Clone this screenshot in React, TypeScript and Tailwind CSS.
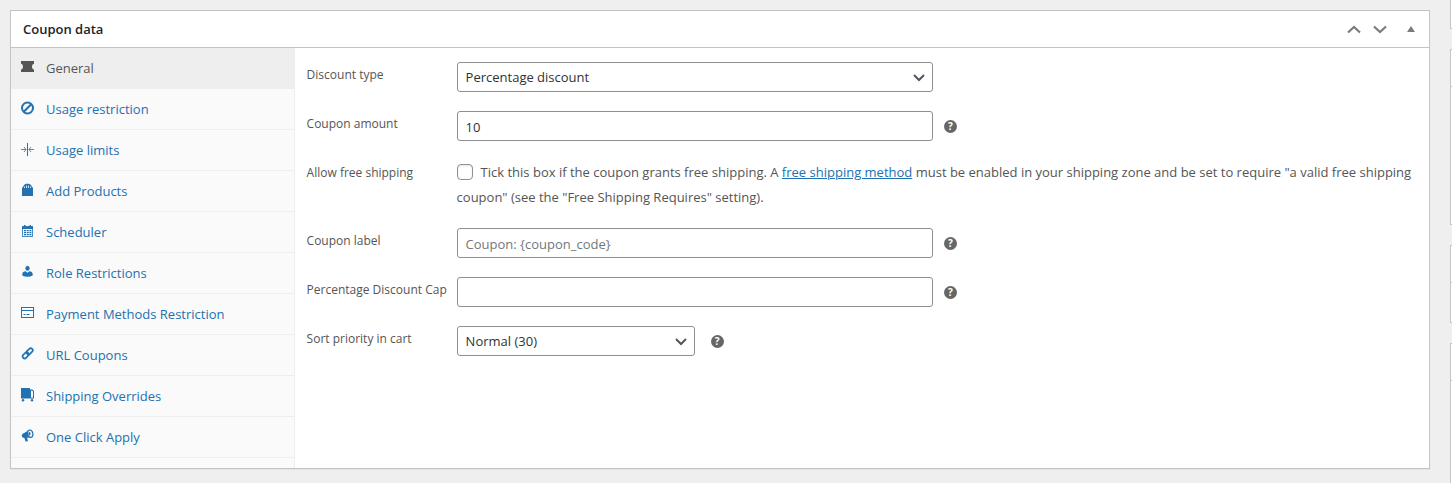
import type { ReactNode } from 'react';

const icons: Record<string, ReactNode> = {
  ticket: (
    <path fill="currentColor" d="M0 1h13v2.800c-1.200.3-2 1.300-2 2.900s.8 2.600 2 2.900V12H0V9.600c1.200-.3 2-1.300 2-2.900s-.8-2.600-2-2.900z" />
  ),
  ban: (
    <g fill="none" stroke="currentColor" strokeWidth="2">
      <circle cx="6.500" cy="7" r="5.500" />
      <path d="M2.800 10.700l7.400-7.400" />
    </g>
  ),
  limits: (
    <g fill="none" stroke="currentColor" strokeWidth="1">
      <path d="M6.500 1v13" />
      <path d="M0 7.500h5M13 7.500H8M3 5l2 2.500L3 10M10 5L8 7.500l2 2.500" opacity=".8" />
    </g>
  ),
  bag: (
    <g>
      <path fill="currentColor" d="M1 4.500h11V13H1z" />
      <path fill="currentColor" d="M1.500 5L3 2c1-1 2-1.300 3.500-1.300S9 1 10 2l1.500 3z" />
      <path stroke="#fafafa" strokeWidth=".8" fill="none" d="M3.500 5V3.500M5.500 5V2.500M7.500 5V2.500M9.500 5V3.500" />
    </g>
  ),
  calendar: (
    <g fill="currentColor">
      <path d="M1 2h11v11H1zM2 5v7h9V5z" fillRule="evenodd" opacity=".8" />
      <path d="M1 2.500h11V5H1zM3 1h1.500v2H3zM8.500 1H10v2H8.500z" />
      <path d="M3 6h2v1.300H3zM5.700 6h2v1.300h-2zM8.400 6h2v1.300h-2zM3 8h2v1.300H3zM5.700 8h2v1.300h-2zM8.400 8h2v1.300h-2zM3 10h2v1.300H3zM5.700 10h2v1.300h-2zM8.400 10h2v1.300h-2z" />
    </g>
  ),
  person: (
    <g fill="currentColor">
      <ellipse cx="6.500" cy="3.200" rx="2.100" ry="2.500" />
      <path d="M1.300 10.500V9.200C1.300 7.200 2.800 6.300 4.500 6.200l2 1.600 2-1.600c1.700.1 3.200 1 3.200 3v1.300c-1.500.8-3.200 1.200-5.200 1.200s-3.700-.4-5.200-1.200z" />
    </g>
  ),
  card: (
    <g fill="none" stroke="currentColor">
      <rect x=".5" y="1.500" width="12" height="10" />
      <path d="M1 4.500h11M2.500 8.500h2M5.500 8.500h3" />
    </g>
  ),
  link: (
    <g fill="none" stroke="currentColor" strokeWidth="1.700">
      <rect x="-3.500" y="-2" width="7" height="4" rx="2" transform="translate(4.700 8.300) rotate(-45)" />
      <rect x="-3.500" y="-2" width="7" height="4" rx="2" transform="translate(8.700 4.300) rotate(-45)" />
    </g>
  ),
  truck: (
    <g fill="currentColor">
      <path d="M0 0h9v10.500H0z" />
      <path d="M9 1.500h2.500L13 3v7.500H9zM10 2.800v6.700h2v-6l-.8-.7z" fillRule="evenodd" />
      <circle cx="2" cy="12.300" r="1.200" />
      <circle cx="11" cy="12.300" r="1.200" />
    </g>
  ),
  megaphone: (
    <g>
      <path fill="currentColor" d="M.8 6.500c0-1 .8-1.800 2-2.200L6.500 2 8 .8l2.500 8L7 8.600l-.9.200L7 12.200l-2.400.4L3.400 9C1.800 9 .8 8 .8 6.500z" />
      <ellipse cx="9.200" cy="4.700" rx="2.600" ry="3.700" transform="rotate(-12 9.200 4.700)" fill="#fafafa" stroke="currentColor" strokeWidth="1.200" />
      <ellipse cx="8.500" cy="4.800" rx="1.100" ry="1.700" fill="currentColor" />
    </g>
  ),
};

const tabs = [
  { icon: 'ticket', label: 'General' },
  { icon: 'ban', label: 'Usage restriction' },
  { icon: 'limits', label: 'Usage limits' },
  { icon: 'bag', label: 'Add Products' },
  { icon: 'calendar', label: 'Scheduler' },
  { icon: 'person', label: 'Role Restrictions' },
  { icon: 'card', label: 'Payment Methods Restriction' },
  { icon: 'link', label: 'URL Coupons' },
  { icon: 'truck', label: 'Shipping Overrides' },
  { icon: 'megaphone', label: 'One Click Apply' },
];

const controlClass =
  'block h-[30px] w-full appearance-none rounded-[3px] border border-[#8c8f94] bg-white px-2 pt-px text-[13px] text-[#2c3338] placeholder:text-[#72777c]';

function HelpTip() {
  return (
    <button
      type="button"
      aria-label="Help"
      className="flex size-[13px] shrink-0 items-center justify-center rounded-full bg-[#666] text-[10px] leading-3 font-bold text-white"
    >
      ?
    </button>
  );
}

type FieldProps = { id: string; label: string; help?: boolean; half?: boolean; children: ReactNode };

function Field({ id, label, help, half, children }: FieldProps) {
  return (
    <div className="flex pb-[19px]">
      <label htmlFor={id} className="w-[150px] shrink-0 pt-1 text-xs leading-[18px] whitespace-nowrap">
        {label}
      </label>
      <div className="flex flex-1 items-center">
        <div className={half ? 'relative mr-4 w-1/4' : 'relative mr-[11px] w-1/2'}>{children}</div>
        {help && <HelpTip />}
      </div>
    </div>
  );
}

function SelectArrow() {
  return (
    <svg width="12" height="8" viewBox="0 0 12 8" className="pointer-events-none absolute top-3 right-2 text-[#50575e]">
      <path d="M1 1l5 5 5-5" fill="none" stroke="currentColor" strokeWidth="2" />
    </svg>
  );
}

export default function App() {
  return (
    <div className="flex min-h-screen overflow-hidden bg-[#efefef] font-['Open_Sans','Noto_Sans',sans-serif] text-[#555]">
      <div className="min-w-0 flex-1 pt-[10px] pr-5 pl-[10px]">
        <section className="border border-[#c3c4c7] bg-white shadow-[0_1px_1px_rgba(0,0,0,0.04)]">
          <header className="flex h-[37px] items-center justify-between border-b border-[#c3c4c7] px-3">
            <h2 className="pt-px text-[13px] font-semibold text-[#1d2327]">Coupon data</h2>
            <div className="flex items-center pr-[2px] text-[#787c82]">
              <button type="button" aria-label="Move up" className="mr-3">
                <svg width="14" height="9" viewBox="0 0 14 9">
                  <path d="M1 7.500L7 2l6 5.500" fill="none" stroke="currentColor" strokeWidth="2.200" />
                </svg>
              </button>
              <button type="button" aria-label="Move down" className="mr-5">
                <svg width="14" height="9" viewBox="0 0 14 9">
                  <path d="M1 1.500L7 7l6-5.500" fill="none" stroke="currentColor" strokeWidth="2.200" />
                </svg>
              </button>
              <button type="button" aria-label="Toggle panel">
                <svg width="8" height="7" viewBox="0 0 8 7">
                  <path d="M4 0l4 6H0z" fill="currentColor" />
                </svg>
              </button>
            </div>
          </header>

          <div className="flex min-h-[420px]">
            <nav className="w-1/5 shrink-0 border-r border-[#eee] bg-[#fafafa]">
              <ul>
                {tabs.map((tab, idx) => (
                  <li key={tab.label} className="border-b border-[#eee]">
                    <a
                      href="#"
                      className={`flex h-10 items-center gap-3 px-[10px] pt-[2px] text-[13px] ${idx === 0 ? 'bg-[#eee] text-[#555]' : 'text-[#2271b1]'}`}
                    >
                      <svg width="13" height="14" viewBox="0 0 13 14" className="mb-1 shrink-0">
                        {icons[tab.icon]}
                      </svg>
                      {tab.label}
                    </a>
                  </li>
                ))}
              </ul>
            </nav>

            <form className="min-w-0 flex-1 pt-[14px] pr-5 pl-3">
              <Field id="discount_type" label="Discount type">
                <select id="discount_type" className={controlClass}>
                  <option>Percentage discount</option>
                </select>
                <SelectArrow />
              </Field>
              <Field id="coupon_amount" label="Coupon amount" help>
                <input id="coupon_amount" type="text" defaultValue="10" className={controlClass} />
              </Field>
              <div className="-mr-4 flex pb-[18px]">
                <label htmlFor="free_shipping" className="w-[150px] shrink-0 pt-1 text-xs leading-[18px]">
                  Allow free shipping
                </label>
                <p className="flex-1 text-[13px] leading-[25px]">
                  <input
                    id="free_shipping"
                    type="checkbox"
                    className="mr-2 mb-1 size-4 appearance-none rounded-[4px] border border-[#8c8f94] bg-white align-middle shadow-[inset_0_1px_2px_rgba(0,0,0,0.1)]"
                  />
                  Tick this box if the coupon grants free shipping. A{' '}
                  <a href="#" className="text-[#2271b1] underline">free shipping method</a> must be enabled in your shipping
                  zone and be set to require "a valid free shipping coupon" (see the "Free Shipping Requires" setting).
                </p>
              </div>
              <Field id="coupon_label" label="Coupon label" help>
                <input id="coupon_label" type="text" placeholder="Coupon: {coupon_code}" className={controlClass} />
              </Field>
              <Field id="discount_cap" label="Percentage Discount Cap" help>
                <input id="discount_cap" type="text" className={controlClass} />
              </Field>
              <Field id="sort_priority" label="Sort priority in cart" help half>
                <select id="sort_priority" className={controlClass}>
                  <option>Normal (30)</option>
                </select>
                <SelectArrow />
              </Field>
            </form>
          </div>
        </section>
      </div>

      {/* edge of the side column */}
      <aside className="flex w-[2px] shrink-0 flex-col gap-5">
        <div className="h-[29px] border-b border-l border-[#c3c4c7] bg-white" />
        <div className="h-44 border border-r-0 border-[#c3c4c7] bg-white">
          <div className="h-[37px] border-b border-[#c3c4c7]" />
        </div>
        <div className="h-[78px] border border-r-0 border-[#c3c4c7] bg-white">
          <div className="h-[37px] border-b border-[#c3c4c7]" />
        </div>
        <div className="flex-1 border-t border-l border-[#c3c4c7] bg-white">
          <div className="h-[37px] border-b border-[#c3c4c7]" />
        </div>
      </aside>
    </div>
  );
}
